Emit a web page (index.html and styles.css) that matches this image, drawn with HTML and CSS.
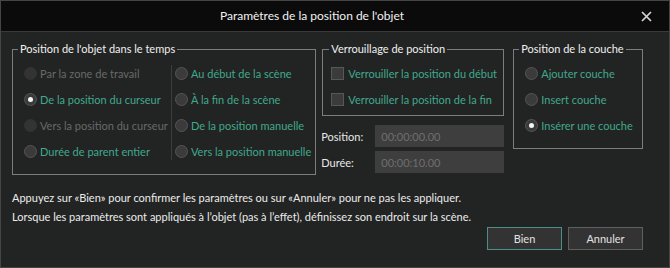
FILE: index.html
```html
<!DOCTYPE html>
<html lang="fr">
<head>
  <meta charset="UTF-8" />
  <meta name="viewport" content="width=device-width, initial-scale=1.0"/>
  <title>Paramètres de la position de l'objet</title>
  <link rel="stylesheet" href="styles.css">
</head>
<body>

  <div class="window">
    <div class="titlebar">
      <div class="title">Paramètres de la position de l'objet</div>
      <div class="close">
        <svg width="11" height="11" viewBox="0 0 11 11">
          <path d="M1 1 L10 10 M10 1 L1 10" stroke="#d4d4d4" stroke-width="1.7" fill="none"/>
        </svg>
      </div>
    </div>

    <div class="content">
      <div class="groups">

        <fieldset class="group group-time">
          <legend>Position de l'objet dans le temps</legend>
          <div class="cols">
            <div class="col col-left">
              <div class="option disabled"><span class="radio"></span>Par la zone de travail</div>
              <div class="option"><span class="radio checked"></span>De la position du curseur</div>
              <div class="option disabled"><span class="radio"></span>Vers la position du curseur</div>
              <div class="option"><span class="radio"></span>Durée de parent entier</div>
            </div>
            <div class="sep"></div>
            <div class="col">
              <div class="option"><span class="radio"></span>Au début de la scène</div>
              <div class="option"><span class="radio"></span>À la fin de la scène</div>
              <div class="option"><span class="radio"></span>De la position manuelle</div>
              <div class="option"><span class="radio"></span>Vers la position manuelle</div>
            </div>
          </div>
        </fieldset>

        <div class="middle">
          <fieldset class="group group-lock">
            <legend>Verrouillage de position</legend>
            <div class="option"><span class="check"></span>Verrouiller la position du début</div>
            <div class="option"><span class="check"></span>Verrouiller la position de la fin</div>
          </fieldset>
          <div class="field">
            <label>Position:</label>
            <input type="text" value="00:00:00.00" disabled>
          </div>
          <div class="field">
            <label>Durée:</label>
            <input type="text" value="00:00:10.00" disabled>
          </div>
        </div>

        <fieldset class="group group-layer">
          <legend>Position de la couche</legend>
          <div class="option"><span class="radio"></span>Ajouter couche</div>
          <div class="option"><span class="radio"></span>Insert couche</div>
          <div class="option"><span class="radio checked"></span>Insérer une couche</div>
        </fieldset>

      </div>

      <p class="note first">Appuyez sur «Bien» pour confirmer les paramètres ou sur «Annuler» pour ne pas les appliquer.</p>
      <p class="note">Lorsque les paramètres sont appliqués à l’objet (pas à l’effet), définissez son endroit sur la scène.</p>

      <div class="buttons">
        <button class="btn btn-ok">Bien</button>
        <button class="btn">Annuler</button>
      </div>
    </div>
  </div>

</body>
</html>
```

FILE: styles.css
```css
body {
  margin: 0;
  background: #222423;
  font-family: Lato, 'Liberation Sans', sans-serif;
  font-size: 11px;
}

.window {
  width: 670px;
  height: 268px;
  box-sizing: border-box;
  border: 1px solid #454545;
  background: #222423;
}

.titlebar {
  display: flex;
  height: 30px;
  background: #0b0b0b;
  border-bottom: 1px solid #3a3a3a;
}

.title {
  flex: 1;
  text-align: center;
  line-height: 30px;
  font-size: 12px;
  color: #f2f2f2;
}

.close {
  width: 46px;
  display: flex;
  align-items: center;
  justify-content: center;
}

.content {
  padding: 10px 26px 0 11px;
}

.groups {
  display: flex;
  align-items: flex-start;
}

.group {
  margin: 0;
  padding: 4px 0 10px 11px;
  border: 1px solid #7d7d7d;
  min-width: 0;
}

.group legend {
  margin-left: -6px;
  padding: 0 2px;
  line-height: 14px;
  color: #f0f0f0;
  white-space: nowrap;
}

.group-time {
  width: 305px;
  box-sizing: border-box;
}

.group-lock {
  width: 182px;
  box-sizing: border-box;
  padding: 4px 0 3px 8px;
}

.group-lock legend {
  margin-left: -2px;
}

.group-layer {
  width: 130px;
  box-sizing: border-box;
  margin-left: 9px;
}

.middle {
  margin-left: 6px;
}

.cols {
  display: flex;
}

.col-left {
  width: 147px;
}

.sep {
  width: 1px;
  margin: 5px 3px 4px 0;
  background: #3c3c3c;
}

.option {
  display: flex;
  align-items: center;
  height: 26px;
  color: #41a88d;
  white-space: nowrap;
}

.option.disabled {
  color: #696969;
}

.radio {
  flex: none;
  width: 13px;
  height: 13px;
  box-sizing: border-box;
  border-radius: 50%;
  background: #3b3b3b;
  border: 1px solid #555;
  margin-right: 3px;
  display: flex;
  align-items: center;
  justify-content: center;
}

.disabled .radio {
  background: #333;
  border-color: #333;
}

.radio.checked::after {
  content: "";
  width: 5px;
  height: 5px;
  border-radius: 50%;
  background: #f4f4f4;
}

.check {
  flex: none;
  width: 13px;
  height: 13px;
  box-sizing: border-box;
  background: #3b3b3b;
  border: 1px solid #575757;
  margin-right: 4px;
}

.field {
  display: flex;
  align-items: center;
  margin-top: 4px;
}

.group-lock + .field {
  margin-top: 9px;
}

.field label {
  width: 53px;
  margin-left: -1px;
  color: #e8e8e8;
  box-sizing: border-box;
}

.field input {
  width: 129px;
  height: 22px;
  box-sizing: border-box;
  margin-left: 1px;
  padding: 0 6px;
  border: none;
  background: #3e3e3e;
  color: #6e6e6e;
  font-family: inherit;
  font-size: 11px;
}

.note {
  margin: 0;
  line-height: 19px;
  color: #ececec;
  white-space: nowrap;
}

.note.first {
  margin-top: 13px;
}

.buttons {
  display: flex;
  justify-content: flex-end;
  gap: 6px;
  margin-top: 1px;
}

.btn {
  width: 75px;
  height: 23px;
  background: #333;
  border: 1px solid #5f5f5f;
  color: #e2e2e2;
  font-family: inherit;
  font-size: 11px;
  padding: 0;
}

.btn-ok {
  border-color: #4b8f87;
}
```
